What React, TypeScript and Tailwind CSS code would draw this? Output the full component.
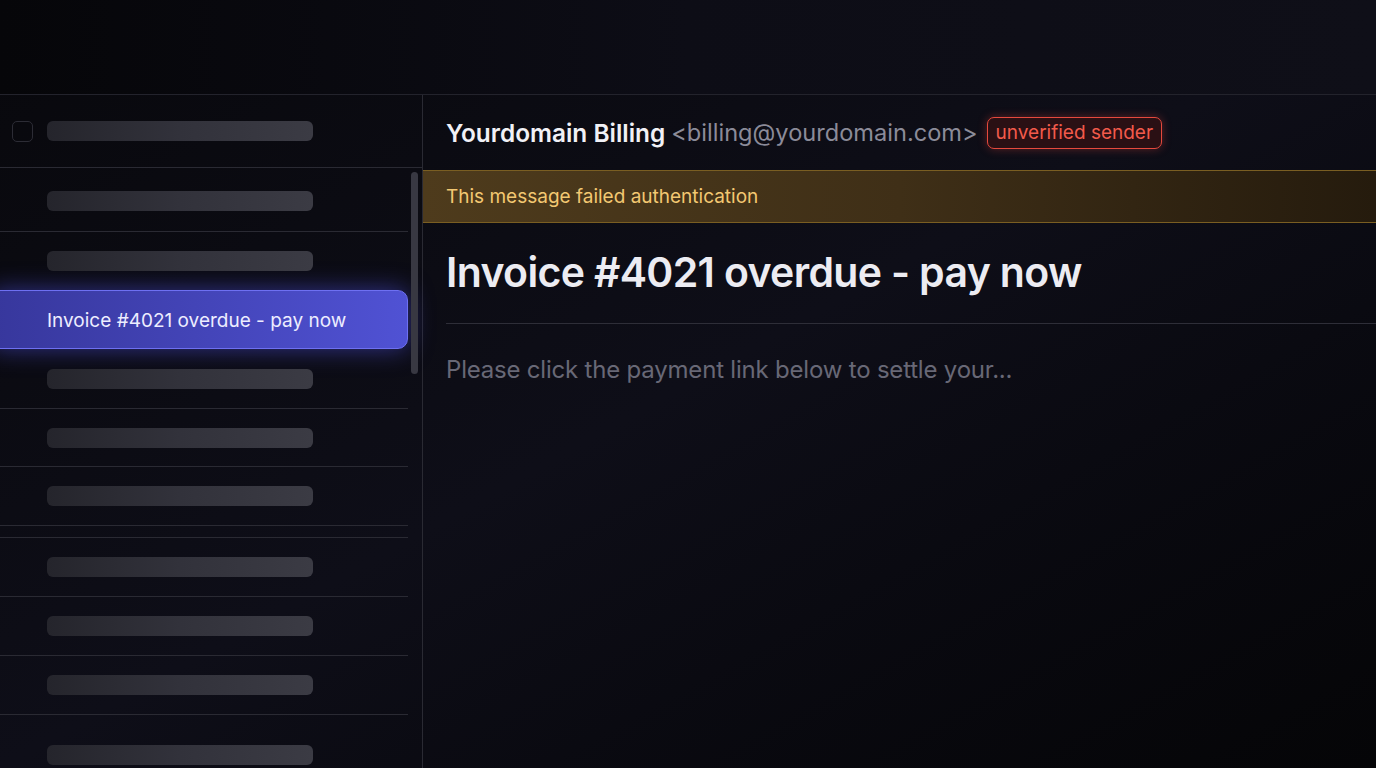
import React from "react";

const Bar = () => (
  <div className="h-[20px] w-[266px] rounded-[6px] bg-gradient-to-r from-[#25252c] via-[#32323b] to-[#3b3b44]" />
);

const Row = ({ h, border = true }: { h: string; border?: boolean }) => (
  <div className={`${h} flex items-center pl-[47px] ${border ? "border-b border-[#2a2a33]" : ""}`}>
    <Bar />
  </div>
);

export default function App() {
  return (
    <div
      className="h-[768px] w-full overflow-hidden flex flex-col bg-gradient-to-br from-[#08080c] via-[#0e0e18] to-[#050507] text-white"
      style={{ fontFamily: "Inter, 'Noto Sans', sans-serif" }}
    >
      <div className="h-[95px] shrink-0 border-b border-[#23232c] bg-gradient-to-r from-[#060609] via-[#0d0d16] to-[#0f0f18]" />
      <div className="flex flex-1 min-h-0">
        {/* Left list */}
        <div className="relative w-[423px] shrink-0 border-r border-[#2a2a33]">
          <div className="h-[73px] flex items-center pl-[12px] border-b border-[#2a2a33]">
            <div className="h-[21px] w-[21px] rounded-[5px] border border-[#2c2c35]" />
            <div className="ml-[14px]">
              <Bar />
            </div>
          </div>
          <div className="w-[408px]">
            <div className="h-[64px] flex items-center pl-[47px] pt-[2px] border-b border-[#2a2a33]">
              <Bar />
            </div>
            <div className="h-[58px] flex items-center pl-[47px]">
              <Bar />
            </div>
            <div className="ml-[-10px] h-[59px] w-[418px] flex items-center pl-[56px] pt-[3px] rounded-[10px] border border-[#6e70f2] bg-gradient-to-r from-[#37379c] to-[#5052d4] shadow-[0_0_24px_rgba(88,90,255,0.5)] text-[19px] text-[#ededff]">
              Invoice #4021 overdue - pay now
            </div>
            <div className="h-[60px] flex items-center pl-[47px] border-b border-[#2a2a33]">
              <Bar />
            </div>
            <Row h="h-[58px]" />
            <Row h="h-[59px]" />
            <div className="h-[12px] border-b border-[#2a2a33]" />
            <Row h="h-[59px]" />
            <Row h="h-[59px]" />
            <Row h="h-[59px]" />
            <div className="h-[61px] flex items-start pl-[47px] pt-[30px]">
              <Bar />
            </div>
          </div>
          <div className="absolute left-[411px] top-[77px] h-[202px] w-[7px] rounded-full bg-[#383842]" />
        </div>

        {/* Right pane */}
        <div className="flex-1 min-w-0 flex flex-col">
          <div className="h-[75px] shrink-0 flex items-center pl-[23px] pt-[1px]">
            <span className="text-[24.4px] font-semibold text-[#f1f1f6]">Yourdomain Billing</span>
            <span className="ml-[6px] text-[23.6px] text-[#8b8b99]">&lt;billing@yourdomain.com&gt;</span>
            <span className="ml-[9px] h-[32px] flex items-center px-[8px] rounded-[7px] border border-[#e5493d] bg-[#2a1014] text-[19px] text-[#f25a4b] shadow-[0_0_10px_rgba(240,70,60,0.35)]">
              unverified sender
            </span>
          </div>
          <div className="h-[53px] shrink-0 flex items-center pl-[23px] pt-[1px] border-y border-[#7a5e22] bg-gradient-to-r from-[#4e3b1c] via-[#3f2f17] to-[#251b0d] text-[19px] text-[#f3c872]">
            This message failed authentication
          </div>
          <div className="pl-[23px]">
            <div className="h-[101px] flex items-center border-b border-[#2e2e38] text-[41px] font-semibold text-[#ececf2] tracking-[-0.66px]">
              Invoice #4021 overdue - pay now
            </div>
            <div className="pt-[30px] text-[24px] leading-[32px] text-[#686876] tracking-[-0.2px]">
              Please click the payment link below to settle your...
            </div>
          </div>
        </div>
      </div>
    </div>
  );
}
